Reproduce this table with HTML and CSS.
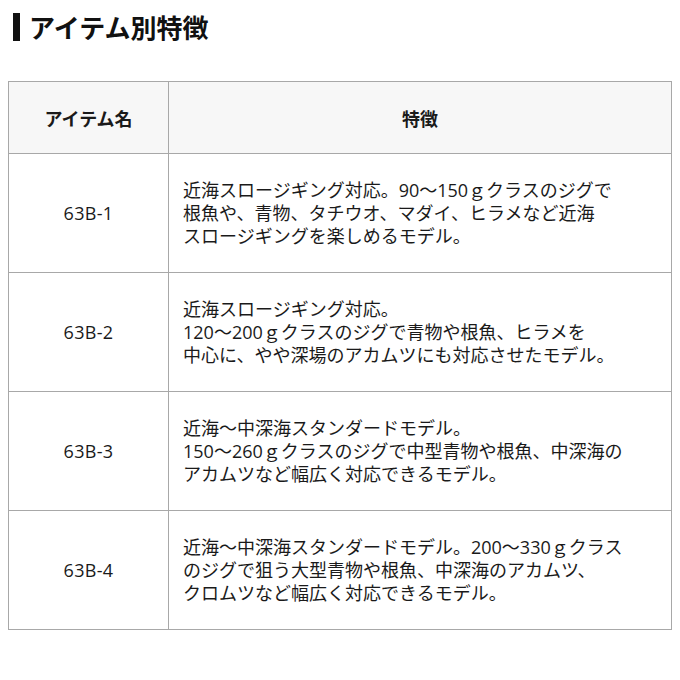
FILE: index.html
```html
<!DOCTYPE html>
<html lang="ja">
<head>
<meta charset="utf-8">
<link rel="stylesheet" href="styles.css">
</head>
<body>
<h2 class="title"><span class="bar"></span>アイテム別特徴</h2>
<table class="spec">
  <thead>
    <tr><th class="c-name">アイテム名</th><th>特徴</th></tr>
  </thead>
  <tbody>
    <tr><td class="c-name">63B-1</td><td class="desc"><span class="ln">近海スロージギング対応。90～150ｇクラスのジグで</span><span class="ln">根魚や、青物、タチウオ、マダイ、ヒラメなど近海</span><span class="ln">スロージギングを楽しめるモデル。</span></td></tr>
    <tr><td class="c-name">63B-2</td><td class="desc"><span class="ln">近海スロージギング対応。</span><span class="ln">120～200ｇクラスのジグで青物や根魚、ヒラメを</span><span class="ln">中心に、やや深場のアカムツにも対応させたモデル。</span></td></tr>
    <tr><td class="c-name">63B-3</td><td class="desc"><span class="ln">近海～中深海スタンダードモデル。</span><span class="ln">150～260ｇクラスのジグで中型青物や根魚、中深海の</span><span class="ln">アカムツなど幅広く対応できるモデル。</span></td></tr>
    <tr><td class="c-name">63B-4</td><td class="desc"><span class="ln">近海～中深海スタンダードモデル。200～330ｇクラス</span><span class="ln">のジグで狙う大型青物や根魚、中深海のアカムツ、</span><span class="ln">クロムツなど幅広く対応できるモデル。</span></td></tr>
  </tbody>
</table>
</body>
</html>
```
FILE: styles.css
```css
body {
  margin: 0;
  background: #fff;
  color: #1a1a1a;
  font-family: "Noto Sans CJK JP", "Noto Sans", sans-serif;
}
.title {
  display: flex;
  align-items: center;
  gap: 9px;
  margin: 0;
  padding: 12px 0 0 13px;
  height: 30px;
  font-size: 26px;
  font-weight: 700;
  color: #111;
  line-height: 30px;
}
.bar {
  display: block;
  width: 7px;
  height: 28px;
  background: #111;
}
.spec {
  margin: 39px 0 0 8px;
  width: 664px;
  border-collapse: collapse;
  font-size: 18px;
}
.spec th, .spec td {
  border: 1px solid #a8a8a8;
}
.spec th {
  background: #f7f7f7;
  height: 71px;
  font-size: 18px;
  font-weight: 700;
  text-align: center;
  padding: 0;
}
.spec td {
  height: 118px;
  padding: 0;
}
.c-name {
  width: 159px;
  text-align: center;
}
td.c-name {
  font-family: "Open Sans", "Noto Sans CJK JP", sans-serif;
  letter-spacing: 0.3px;
}
.desc {
  padding-left: 14px !important;
  font-family: "Open Sans", "Noto Sans CJK JP", sans-serif;
  white-space: nowrap;
}
.ln {
  display: block;
  height: 23px;
  line-height: 23px;
}
```
